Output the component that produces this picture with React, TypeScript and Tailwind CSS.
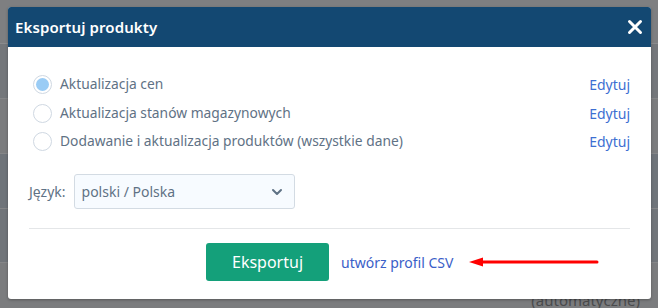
import { ChevronDown } from "lucide-react";

const OPTIONS = [
  { label: "Aktualizacja cen", checked: true },
  { label: "Aktualizacja stanów magazynowych", checked: false },
  { label: "Dodawanie i aktualizacja produktów (wszystkie dane)", checked: false },
];

function Backdrop() {
  // table behind the dim overlay
  return (
    <div className="absolute inset-0 flex flex-col bg-[#7d7e80]">
      <div className="h-[44px] border-b border-[#8a8b8d] bg-[#7e7f81]" />
      <div className="h-[55px] bg-[#74777b]" />
      <div className="h-[56px] border-t border-[#858688] bg-[#7b7c7e]" />
      <div className="h-[55px] border-t border-[#858688] bg-[#6f747a]" />
      <div className="h-[55px] border-t border-[#858688] bg-[#71757a]" />
      <div className="flex flex-1 border-t border-[#858688] bg-[#7b7c7e] justify-end pr-[18px]">
        <span className="font-['Noto_Sans',sans-serif] text-[15px] leading-none pt-[30px] text-[#4a4b4d]">
          (automatyczne)
        </span>
      </div>
    </div>
  );
}

export default function App() {
  return (
    <div className="relative h-[308px] w-[658px] overflow-hidden font-['Noto_Sans',sans-serif]">
      <Backdrop />

      <div className="absolute left-[8px] top-[7px] w-[643px] h-[292px] overflow-hidden rounded-[3px] bg-white shadow-[0_1px_3px_rgba(0,0,0,0.3)]">
        <div className="flex h-[40px] items-center justify-between bg-[#134872] pl-[7px] pr-[8px]">
          <h2 className="text-[15px] font-semibold text-white tracking-[0.1px]">Eksportuj produkty</h2>
          <svg width="16" height="16" viewBox="0 0 16 16" className="text-white">
            <path d="M2.5 2.5 L13.5 13.5 M13.5 2.5 L2.5 13.5" stroke="currentColor" strokeWidth="3" strokeLinecap="round" />
          </svg>
        </div>

        <div className="px-[21px] pt-[28px]">
          <div className="flex flex-col gap-[9.5px] pl-[4px]">
            {OPTIONS.map((o) => (
              <label key={o.label} className="flex h-[19px] items-center justify-between">
                <span className="flex items-center gap-[8px]">
                  <span className="flex h-[19px] w-[19px] items-center justify-center rounded-full border border-[#cfd8e2] bg-white">
                    {o.checked && <span className="h-[13px] w-[13px] rounded-full bg-[#9accf5]" />}
                  </span>
                  <span className="text-[13.8px] text-[#5f7285]">{o.label}</span>
                </span>
                <a className="text-[14px] text-[#3d6fd2]">Edytuj</a>
              </label>
            ))}
          </div>

          <div className="mt-[23px] flex items-center gap-[8px]">
            <span className="text-[14px] text-[#5f7285]">Język:</span>
            <div className="flex h-[35px] w-[221px] items-center justify-between rounded-[3px] border border-[#d3dbe3] bg-[#f7fbff] pl-[7px] pr-[9px]">
              <span className="text-[14px] text-[#5f7285]">polski / Polska</span>
              <ChevronDown size={16} strokeWidth={3} className="text-[#5f7285]" />
            </div>
          </div>

          <div className="mt-[19px] border-t border-[#e4e6e8]" />

          <div className="mt-[14px] flex items-center">
            <button className="ml-[177px] h-[38px] w-[123px] rounded-[3px] bg-[#14a07a] text-[16px] text-white">
              Eksportuj
            </button>
            <a className="ml-[12px] text-[14px] text-[#3a60c8]">utwórz profil CSV</a>
            <svg width="132" height="12" viewBox="0 0 132 12" className="ml-[16px]">
              <path d="M10 6 L128 6" stroke="#ff0000" strokeWidth="3" strokeLinecap="round" />
              <path d="M0 6 L14 1.5 L14 10.5 Z" fill="#ff0000" />
            </svg>
          </div>
        </div>
      </div>
    </div>
  );
}
